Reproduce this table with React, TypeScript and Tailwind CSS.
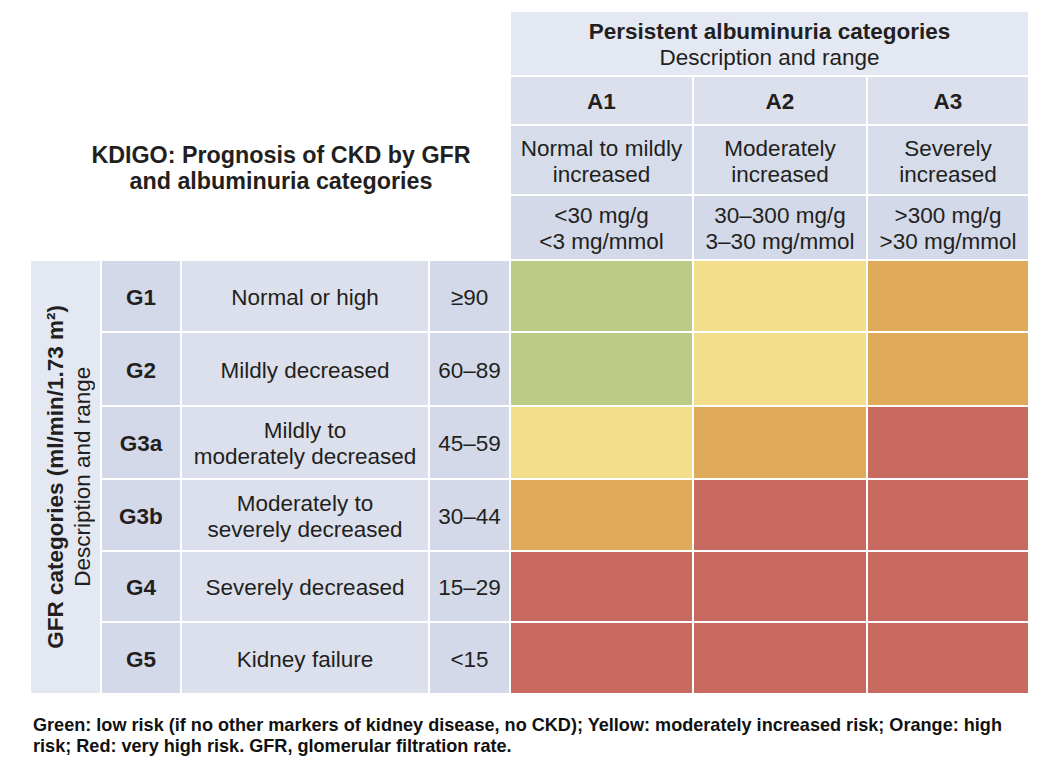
import { JSX } from "react";

type Risk = "g" | "y" | "o" | "r";

const riskBg: Record<Risk, string> = {
  g: "bg-[#bccb86]",
  y: "bg-[#f3de8c]",
  o: "bg-[#dfab5b]",
  r: "bg-[#c96a61]",
};

const albCols = ["col-start-5", "col-start-6", "col-start-7"];
const gRowStart = ["row-start-5", "row-start-6", "row-start-7", "row-start-8", "row-start-9", "row-start-10"];

const albuminuria = [
  { code: "A1", desc: ["Normal to mildly", "increased"], range: ["<30 mg/g", "<3 mg/mmol"] },
  { code: "A2", desc: ["Moderately", "increased"], range: ["30–300 mg/g", "3–30 mg/mmol"] },
  { code: "A3", desc: ["Severely", "increased"], range: [">300 mg/g", ">30 mg/mmol"] },
];

const gfrRows: { code: string; desc: string[]; range: string; risk: Risk[] }[] = [
  { code: "G1", desc: ["Normal or high"], range: "≥90", risk: ["g", "y", "o"] },
  { code: "G2", desc: ["Mildly decreased"], range: "60–89", risk: ["g", "y", "o"] },
  { code: "G3a", desc: ["Mildly to", "moderately decreased"], range: "45–59", risk: ["y", "o", "r"] },
  { code: "G3b", desc: ["Moderately to", "severely decreased"], range: "30–44", risk: ["o", "r", "r"] },
  { code: "G4", desc: ["Severely decreased"], range: "15–29", risk: ["r", "r", "r"] },
  { code: "G5", desc: ["Kidney failure"], range: "<15", risk: ["r", "r", "r"] },
];

const cell = "flex flex-col items-center justify-center text-center leading-[26px] pt-[3px]";

export default function App(): JSX.Element {
  return (
    <div className="w-[1048px] h-[768px] bg-white text-[#231f20] [font-family:'Liberation_Sans',Arial,sans-serif]">
      <div className="pt-[12px] pl-[31px]">
        <div className="grid grid-cols-[69px_78px_246px_79px_181px_172px_160px] grid-rows-[63px_47px_68px_63px_70px_72px_71px_70px_69px_70px] gap-[2px] text-[22.5px]">
          {/* title */}
          <div className="col-start-1 col-end-5 row-start-2 row-end-5 flex flex-col items-center justify-center pl-[22px] pb-[1px] font-bold text-[23.3px] leading-[26px] text-center">
            <span>KDIGO: Prognosis of CKD by GFR</span>
            <span>and albuminuria categories</span>
          </div>

          {/* albuminuria header */}
          <div className={`col-start-5 col-end-8 row-start-1 bg-[#e4e8f2] ${cell}`}>
            <span className="font-bold">Persistent albuminuria categories</span>
            <span>Description and range</span>
          </div>

          {albuminuria.map((a, i) => (
            <div key={a.code} className="contents">
              <div className={`row-start-2 bg-[#dbe0ec] font-bold ${cell} ${albCols[i]}`}>{a.code}</div>
              <div className={`row-start-3 bg-[#d6dcea] ${cell} ${albCols[i]}`}>
                {a.desc.map((d) => (
                  <span key={d}>{d}</span>
                ))}
              </div>
              <div className={`row-start-4 bg-[#d3d9e8] ${cell} ${albCols[i]}`}>
                {a.range.map((d) => (
                  <span key={d}>{d}</span>
                ))}
              </div>
            </div>
          ))}

          {/* GFR side label */}
          <div className="col-start-1 row-start-5 row-end-11 bg-[#e4e8f2] flex items-center justify-center pl-[6px]">
            <div className="[writing-mode:vertical-rl] rotate-180 text-center leading-[27px] text-[22.5px]">
              <span className="block font-bold">GFR categories (ml/min/1.73 m²)</span>
              <span className="block">Description and range</span>
            </div>
          </div>

          {gfrRows.map((g, i) => (
            <div key={g.code} className="contents">
              <div className={`col-start-2 ${gRowStart[i]} bg-[#d3d9e8] font-bold ${cell}`}>{g.code}</div>
              <div className={`col-start-3 ${gRowStart[i]} bg-[#dce0ec] ${cell}`}>
                {g.desc.map((d) => (
                  <span key={d}>{d}</span>
                ))}
              </div>
              <div className={`col-start-4 ${gRowStart[i]} bg-[#d3d9e8] ${cell}`}>{g.range}</div>
              {g.risk.map((r, j) => (
                <div key={j} className={`${albCols[j]} ${gRowStart[i]} ${riskBg[r]}`} />
              ))}
            </div>
          ))}
        </div>
      </div>

      <p className="mt-[22px] ml-[33px] w-[985px] font-bold text-[18.1px] leading-[21px] text-[#111]">
        Green: low risk (if no other markers of kidney disease, no CKD); Yellow: moderately increased risk; Orange: high
        risk; Red: very high risk. GFR, glomerular filtration rate.
      </p>
    </div>
  );
}
